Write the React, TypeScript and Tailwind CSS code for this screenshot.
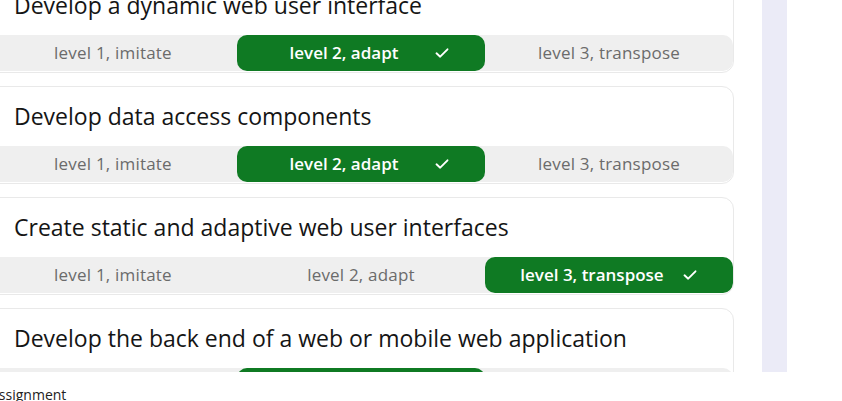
import React from 'react';

type Level = 1 | 2 | 3;

interface Skill {
  title: string;
  level: Level;
}

const skills: Skill[] = [
  { title: 'Develop a dynamic web user interface', level: 2 },
  { title: 'Develop data access components', level: 2 },
  { title: 'Create static and adaptive web user interfaces', level: 3 },
  { title: 'Develop the back end of a web or mobile web application', level: 2 },
];

const levels: { id: Level; label: string }[] = [
  { id: 1, label: 'level 1, imitate' },
  { id: 2, label: 'level 2, adapt' },
  { id: 3, label: 'level 3, transpose' },
];

const Check = () => (
  <svg width="14" height="11" viewBox="0 0 14 11" fill="none" className="absolute right-[36px] top-1/2 -translate-y-1/2">
    <path d="M1.5 5.8 L5.2 9.2 L12.5 1.8" stroke="white" strokeWidth="1.9" strokeLinecap="round" strokeLinejoin="round" />
  </svg>
);

const SkillCard: React.FC<{ skill: Skill }> = ({ skill }) => (
  <div className="w-[746px] h-[98px] shrink-0 rounded-[12px] border border-[#e9e9e9] bg-white flex flex-col overflow-hidden">
    <div className="h-[59px] flex items-center pl-[25px] text-[23px] text-[#151515]">
      {skill.title}
    </div>
    <div className="h-[36px] grid grid-cols-3 bg-[#efefef] rounded-[10px]">
      {levels.map((lv) => {
        const active = lv.id === skill.level;
        return active ? (
          <div key={lv.id} className="relative flex items-center justify-center rounded-[10px] bg-[#0f7a23] text-white font-semibold text-[17px]">
            <span className="mr-[34px]">{lv.label}</span>
            <Check />
          </div>
        ) : (
          <div key={lv.id} className="flex items-center justify-center text-[17px] tracking-[0.2px] text-[#6b6b6b]">
            {lv.label}
          </div>
        );
      })}
    </div>
  </div>
);

export default function App() {
  return (
    <div className="w-[842px] h-[401px] overflow-hidden bg-white flex flex-col" style={{ fontFamily: "'Open Sans', 'Noto Sans', sans-serif" }}>
      <div className="h-[372px] flex overflow-hidden shrink-0">
        <div className="w-[762px] shrink-0 overflow-hidden">
          <div className="flex flex-col gap-[13px] -mt-[25px] -ml-[12px]">
            {skills.map((s) => (
              <SkillCard key={s.title} skill={s} />
            ))}
          </div>
        </div>
        <div className="w-[25px] bg-[#ebebf7] shrink-0" />
        <div className="flex-1" />
      </div>
      <div className="flex-1 pt-[13px] -ml-[10px] text-[14px] leading-[20px] text-[#222]">
        Assignment
      </div>
    </div>
  );
}
